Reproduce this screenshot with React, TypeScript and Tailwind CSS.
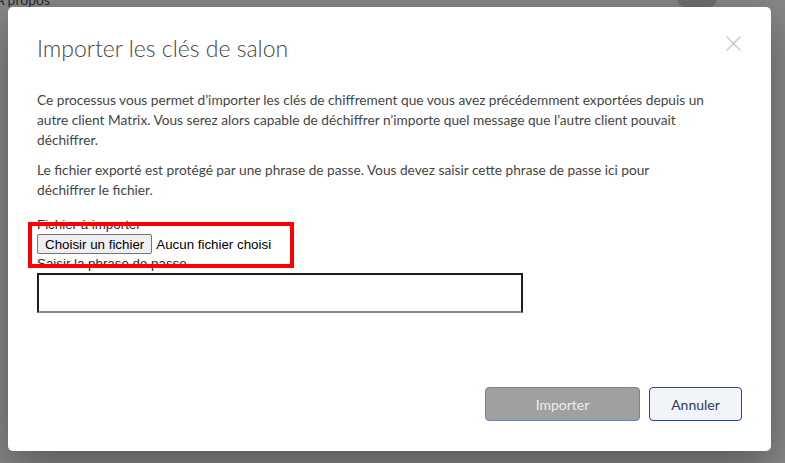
import React from 'react';

const body = "font-['Lato','Open_Sans',sans-serif]";
const native = "font-['Liberation_Sans',Arial,sans-serif]";

function CloseIcon() {
  return (
    <svg className="w-[15px] h-[15px]" viewBox="0 0 15 15" fill="none" stroke="#c4c4c4" strokeWidth={1.2}>
      <path d="M1 1l13 13M14 1L1 14" strokeLinecap="round" />
    </svg>
  );
}

export default function App() {
  return (
    <div className="relative w-[785px] h-[463px] overflow-hidden bg-[#878787]">
      {/* page behind the overlay */}
      <div className={`absolute left-[-5px] top-[-11px] text-[14px] text-[#2a2a2a] ${body}`}>À propos</div>
      <div className="absolute left-[677px] top-[-10px] w-[40px] h-[17px] rounded-full bg-[#6d6f73]" />

      <div className="relative pt-[7px] pl-[8px]">
        <div className="w-[763px] h-[444px] bg-white rounded-[5px] shadow-[0_14px_40px_rgba(0,0,0,0.35)] flex flex-col pl-[29px] pr-[29px]">
          <div className="flex items-start justify-between pt-[26px]">
            <h1 className={`text-[23px] leading-[30px] font-light text-[#454545] ${body}`}>Importer les clés de salon</h1>
            <div className="mt-[3px] mr-[1px]"><CloseIcon /></div>
          </div>

          <div className={`mt-[27px] text-[13.7px] leading-[20px] text-[#454545] ${body}`}>
            <p className="whitespace-nowrap">
              Ce processus vous permet d’importer les clés de chiffrement que vous avez précédemment exportées depuis un
              <br />
              autre client Matrix. Vous serez alors capable de déchiffrer n’importe quel message que l’autre client pouvait
              <br />
              déchiffrer.
            </p>
            <p className="whitespace-nowrap mt-[10px]">
              Le fichier exporté est protégé par une phrase de passe. Vous devez saisir cette phrase de passe ici pour
              <br />
              déchiffrer le fichier.
            </p>
          </div>

          <div className={`relative mt-[17px] text-[13.33px] leading-[15px] text-[#2b2b2b] ${native}`}>
            <div>Fichier à importer</div>
            <div className="flex items-center gap-[4px] mt-[2px]">
              <button className="h-[20px] px-[7px] bg-[#efefef] border border-[#767676] rounded-[2px] text-[13.33px] text-black">
                Choisir un fichier
              </button>
              <span className="text-black">Aucun fichier choisi</span>
            </div>
            <div className="mt-[2px]">Saisir la phrase de passe</div>
            <div className="absolute left-[-9px] top-[5px] w-[266px] h-[46px] border-[4px] border-[#ff0000]" />
          </div>

          <input
            type="password"
            className="mt-[2px] w-[486px] h-[40px] border-2 border-[#1e1e1e] border-b-[#8a8a8a] bg-white outline-none"
          />

          <div className="flex-1" />

          <div className={`flex justify-end gap-[9px] pb-[30px] ${body}`}>
            <button className="w-[155px] h-[34px] rounded-[4px] bg-[#a0a0a0] border border-[#6d84a6] text-[14px] text-[#ededed]">
              Importer
            </button>
            <button className="w-[93px] h-[34px] rounded-[4px] bg-[#f1f4f8] border border-[#2c4a78] text-[14px] text-[#2c3e5c]">
              Annuler
            </button>
          </div>
        </div>
      </div>
    </div>
  );
}
